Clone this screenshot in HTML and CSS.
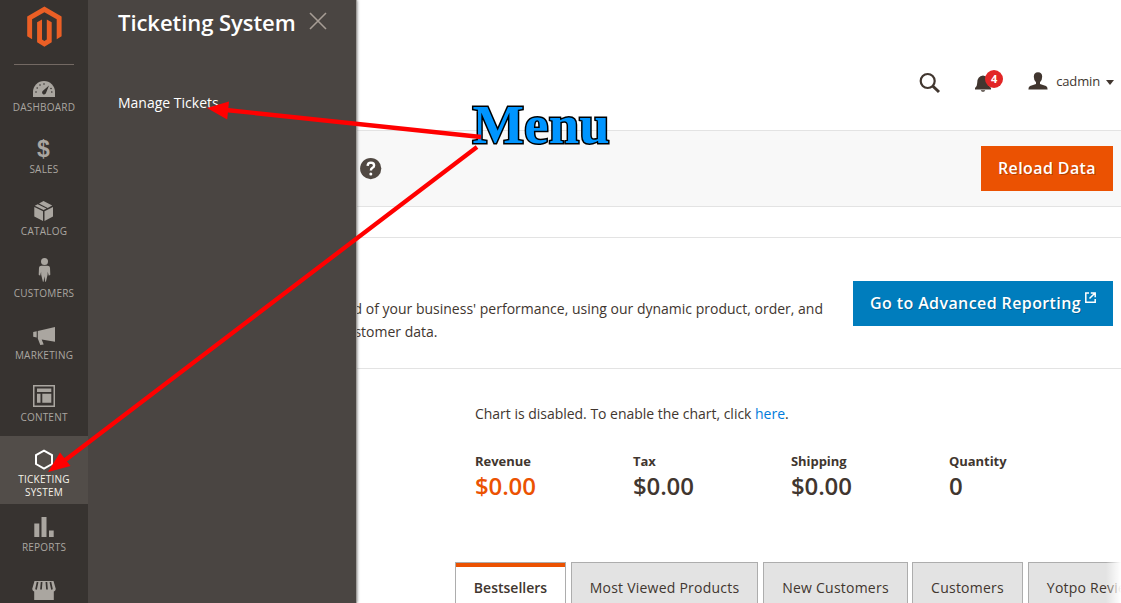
FILE: index.html
```html
<!DOCTYPE html>
<html lang="en">
<head>
<meta charset="utf-8">
<title>Dashboard</title>
<link rel="stylesheet" href="styles.css">
</head>
<body>
<div class="app">
  <nav class="menu">
    <a class="logo"><svg width="36" height="42" viewBox="0 0 36 42"><path fill="#eb5f25" d="M18.400.5 35.600 10.500V30.200l-4.900 3V13.300L18.400 6.200 6.100 13.300v19.900L1.200 30.200V10.500zM11.100 16.300l4.900-2.900v20.200l2.400 1.400 2.400-1.400V13.400l4.900 2.900v20L18.400 40.700l-7.300-4.400z"/></svg></a>
    <a class="item"><svg class="icon" viewBox="24 74 40 27"><path d="M33 97v-5a11 11 0 0 1 22 0v5z"/><g class="cut"><circle cx="36" cy="92" r=".8"/><circle cx="37.200" cy="88" r=".8"/><circle cx="40" cy="85" r=".8"/><circle cx="44" cy="84" r=".8"/><circle cx="51.800" cy="92" r=".8"/><circle cx="51" cy="88.500" r=".8"/><path d="m49 85.500-3 7.500a2 2 0 1 1-3.300-2z"/></g></svg><span>DASHBOARD</span></a>
    <a class="item"><svg class="icon" viewBox="24 136 40 27"><text class="dollar" x="43.500" y="156.500" text-anchor="middle">$</text></svg><span>SALES</span></a>
    <a class="item"><svg class="icon" viewBox="24 198 40 27"><path d="m34.300 207 8.700 4.200v9.900l-8.700-4.700zM53 207l-8.500 4.200v9.900l8.500-4.700zM34.800 205.800l2.900-1.600 8.800 4.300-3 1.500zM39 203.500l4.500-2.500 8.700 4.600-4.500 2.400z"/></svg><span>CATALOG</span></a>
    <a class="item"><svg class="icon" viewBox="24 260 40 27"><circle cx="44.500" cy="261.600" r="3.500"/><path d="M41.200 265.800h6.600q2 0 2.200 2l.3 7-1.500 1-1.100-4-.1 3-1.700 7h-.7l-.8-5.500-.8 5.500h-.7l-1.700-7-.1-3-1 4-1.400-1 .3-7q.2-2 2.200-2z"/></svg><span>CUSTOMERS</span></a>
    <a class="item"><svg class="icon" viewBox="24 322 40 27"><path d="m37.800 331 17.200-4v14.800l-13.300-2.200 2 5-3.400.4-2.500-6.500zM33.200 332l3.500-.8v6.300l-3.500-.7z"/></svg><span>MARKETING</span></a>
    <a class="item"><svg class="icon" viewBox="24 384 40 27"><path fill-rule="evenodd" d="M33 385h22v22H33zM34.500 386.500v19h19v-19zM37 388.500h14.300v3.500H37zM37 393.800h3.500v9H37zM42.300 393.800h9v9h-9z"/></svg><span>CONTENT</span></a>
    <a class="item active"><svg class="icon" viewBox="24 446 40 27"><path class="hex" d="m44 450.600 8 4.500v8.900l-8 4.500-8-4.500v-8.900z"/></svg><span>TICKETING<br>SYSTEM</span></a>
    <a class="item"><svg class="icon" viewBox="24 514 40 27"><path d="M34.300 523.500h5V537h-5zM41.500 517h5v20h-5zM49 530.500h4.700v6.500H49z"/></svg><span>REPORTS</span></a>
    <a class="item"><svg class="icon" viewBox="24 576 40 27"><path d="M34.500 581h19l2.300 8q-.4 2-2 2.500V600H34.200v-8.500q-1.600-.5-2-2.500z"/><path class="stripe" d="m37.600 582-1.600 7.500M41.600 582l-.6 7.500M46.400 582l.6 7.500M50.400 582l1.600 7.500"/></svg></a>
  </nav>

  <main class="page">
    <header class="top">
      <svg class="search" width="22" height="22" viewBox="0 0 22 22"><circle cx="8.700" cy="9" r="7"/><path d="m13.700 14 6.300 6"/></svg>
      <div class="bell">
        <svg width="16" height="18" viewBox="0 0 16 18"><path d="M0 15.500V14q2.200-1.500 2.200-5 0-7 5.800-7.500Q13.800 2 13.800 9q0 3.500 2.200 5v1.500zM5.700 16.300h4.600q-.8 1.500-2.300 1.500t-2.300-1.500z"/></svg>
        <span class="badge">4</span>
      </div>
      <div class="user">
        <svg width="20" height="18" viewBox="0 0 20 18"><path d="M10 .3q4.200 0 4.200 4.500 0 3.500-2.200 5.500v1.800l6 2q1.600.6 1.600 3.400H.4q0-2.800 1.600-3.400l6-2v-1.800Q5.800 8.300 5.800 4.800 5.800.3 10 .3z"/></svg>
        <span>cadmin</span><i class="caret"></i>
      </div>
    </header>
    <div class="toolbar">
      <svg width="22" height="22" viewBox="0 0 22 22"><circle cx="10.700" cy="10.600" r="10.600" fill="#514943"/><path class="ask" d="M7.600 7.900q.2-3.300 3.300-3.300 3.200.1 3.200 2.800 0 1.400-1.600 2.400-1.600 1-1.600 2.600"/><circle cx="10.800" cy="16" r="1.500" fill="#fff"/></svg>
      <button class="btn primary">Reload Data</button>
    </div>
    <section class="advanced">
      <p>Gain new insights and take command of your business' performance, using our dynamic product, order, and<br>customer reports tailored to your customer data.</p>
      <button class="btn blue">Go to Advanced Reporting<svg width="11" height="11" viewBox="0 0 11 11"><path d="M4 1H.8v9.200h9.400V7M5.800.9h4.400v4.300M9.800 1.200 4.500 6.500"/></svg></button>
    </section>
    <section class="stats">
      <p>Chart is disabled. To enable the chart, click <a>here</a>.</p>
      <dl class="totals">
        <div><dt>Revenue</dt><dd class="hot">$0.00</dd></div>
        <div><dt>Tax</dt><dd>$0.00</dd></div>
        <div><dt>Shipping</dt><dd>$0.00</dd></div>
        <div><dt>Quantity</dt><dd>0</dd></div>
      </dl>
    </section>
    <div class="tabs">
      <a class="tab current">Bestsellers</a>
      <a class="tab t2">Most Viewed Products</a>
      <a class="tab t3">New Customers</a>
      <a class="tab t4">Customers</a>
      <a class="tab t5">Yotpo Reviews</a>
    </div>
  </main>

  <aside class="submenu">
    <div class="subhead"><h2>Ticketing System</h2><svg width="18" height="18" viewBox="0 0 18 18"><path d="m1 1 16 16M17 1 1 17"/></svg></div>
    <a>Manage Tickets</a>
  </aside>

  <svg class="notes" viewBox="0 0 1121 603">
    <text x="472.500" y="142.500" textLength="137">Menu</text>
    <path class="arrow" d="M481 137 226 110M477 147 64 461"/>
    <path class="head" d="m207 108 22-6.500-1.800 18zM48 472l12-19.500 10.500 13.500z"/>
  </svg>
</div>
</body>
</html>
```
FILE: styles.css
```css
* { box-sizing: border-box; }
body { margin: 0; overflow: hidden; background: #fff; color: #41362f; font: 14px/23px "Open Sans", sans-serif; }
p, h2, dl, dd { margin: 0; }
svg { display: block; flex: none; }

.app { position: relative; display: flex; width: 1121px; height: 603px; overflow: hidden; }

.menu { width: 88px; flex: none; background: #373330; }
.logo { display: flex; justify-content: center; height: 65px; margin: 0 14px; padding-top: 6px; border-bottom: 1px solid #736963; }
.logo + .item { margin-top: -1px; }
.item { display: block; min-height: 62px; padding: 10px 3px 5px; color: #aaa6a0; font-size: 10px; line-height: 13px; letter-spacing: .22px; text-align: center; }
.icon { width: 40px; height: 27px; margin: 0 auto; overflow: visible; fill: #aaa6a0; }
.cut { fill: #373330; }
.stripe { fill: none; stroke: #373330; stroke-width: 1.7; }
.dollar { font: bold 23px "Liberation Sans", sans-serif; letter-spacing: 0; }
.active { background: #524d49; color: #f7f3eb; }
.hex { fill: none; stroke: #fff; stroke-width: 2; }

.page { flex: 1; min-width: 0; }
.top { display: flex; justify-content: flex-end; height: 131px; padding: 72px 7px 0 0; border-bottom: 1px solid #e3e3e3; }
.search { fill: none; stroke: #41362f; stroke-width: 2.2; }
.search path { stroke-width: 3; }
.bell { position: relative; width: 28px; margin-left: 34px; padding-top: 2px; fill: #41362f; }
.badge { position: absolute; left: 10px; top: -2px; width: 18px; height: 18px; border-radius: 50%; background: #e22626; color: #fff; font-size: 11px; font-weight: 700; line-height: 18px; text-align: center; }
.user { display: flex; margin-left: 25px; fill: #41362f; font-size: 13px; line-height: 19px; letter-spacing: -.15px; }
.user span { margin: 0 6px 0 8px; }
.caret { width: 8px; height: 5px; margin-top: 8px; background: #41362f; clip-path: polygon(0 0, 100% 0, 50% 100%); }

.toolbar { display: flex; justify-content: space-between; align-items: center; height: 76px; padding: 0 8px 0 272px; border-bottom: 1px solid #e3e3e3; background: #f8f8f8; }
.ask { fill: none; stroke: #fff; stroke-width: 2.4; }
.btn { height: 45px; padding: 0; border: 0; color: #fff; font: 600 16px/45px "Open Sans", sans-serif; letter-spacing: .4px; text-shadow: 1px 1px 0 rgba(0,0,0,.25); white-space: nowrap; }
.primary { width: 132px; background: #eb5202; }
.blue { display: flex; justify-content: center; width: 260px; background: #007dbd; }
.blue svg { margin: 11px 0 0 4px; fill: none; stroke: #fff; stroke-width: 1.5; }

.advanced { display: flex; justify-content: flex-end; height: 132px; margin-top: 30px; padding: 43px 8px 0 0; border: solid #e3e3e3; border-width: 1px 0; }
.advanced p { margin: 16px 30px 0 0; white-space: nowrap; }

.stats { height: 193px; padding: 33px 0 0 387px; }
.stats p { letter-spacing: -.02px; }
.stats a { color: #007bdb; }
.totals { display: flex; margin-top: 26px; }
.totals div { width: 158px; }
.totals dt { font-size: 13px; font-weight: 700; line-height: 20px; letter-spacing: -.05px; }
.totals dd { font-size: 24px; font-weight: 600; line-height: 30px; letter-spacing: -.15px; }
.totals .hot { color: #eb5202; }

.tabs { display: flex; gap: 5px; padding-left: 367px; }
.tab { flex: none; width: 111px; height: 60px; padding-top: 13px; border: 1px solid #adadad; background: #e3e3e3; letter-spacing: .23px; text-align: center; }
.current { background: #fff; box-shadow: inset 0 4px #eb5202; font-weight: 600; letter-spacing: 0; }
.t2 { width: 187px; }
.t3 { width: 145px; }
.t4 { margin-left: -1px; }
.t5 { width: 135px; }
.tabs::after { content: ""; position: absolute; right: 0; top: 561px; width: 15px; height: 42px; background: linear-gradient(90deg, rgba(255,255,255,0), #fff); }

.submenu { position: absolute; left: 88px; top: 0; width: 269px; height: 603px; padding: 7px 30px 0; border-right: 1px solid #a19e9b; background: #4a4542; box-shadow: 0 0 3px #6b6b6b; color: #fff; clip-path: inset(0 -5px 0 0); }
.subhead { display: flex; gap: 14px; margin-bottom: 54px; }
.subhead h2 { font-size: 22px; font-weight: 600; line-height: 30px; letter-spacing: -.05px; white-space: nowrap; }
.subhead svg { margin: 5px 0 0 -1px; stroke: #a79d95; stroke-width: 1.6; }

.notes { position: absolute; left: 0; top: 0; width: 1121px; height: 603px; }
.notes text { font: bold 54.5px "Liberation Serif", serif; fill: #0095ff; stroke: #000; stroke-width: 3; paint-order: stroke; }
.arrow { stroke: #f00; stroke-width: 4.300; }
.head { fill: #f00; }
```
